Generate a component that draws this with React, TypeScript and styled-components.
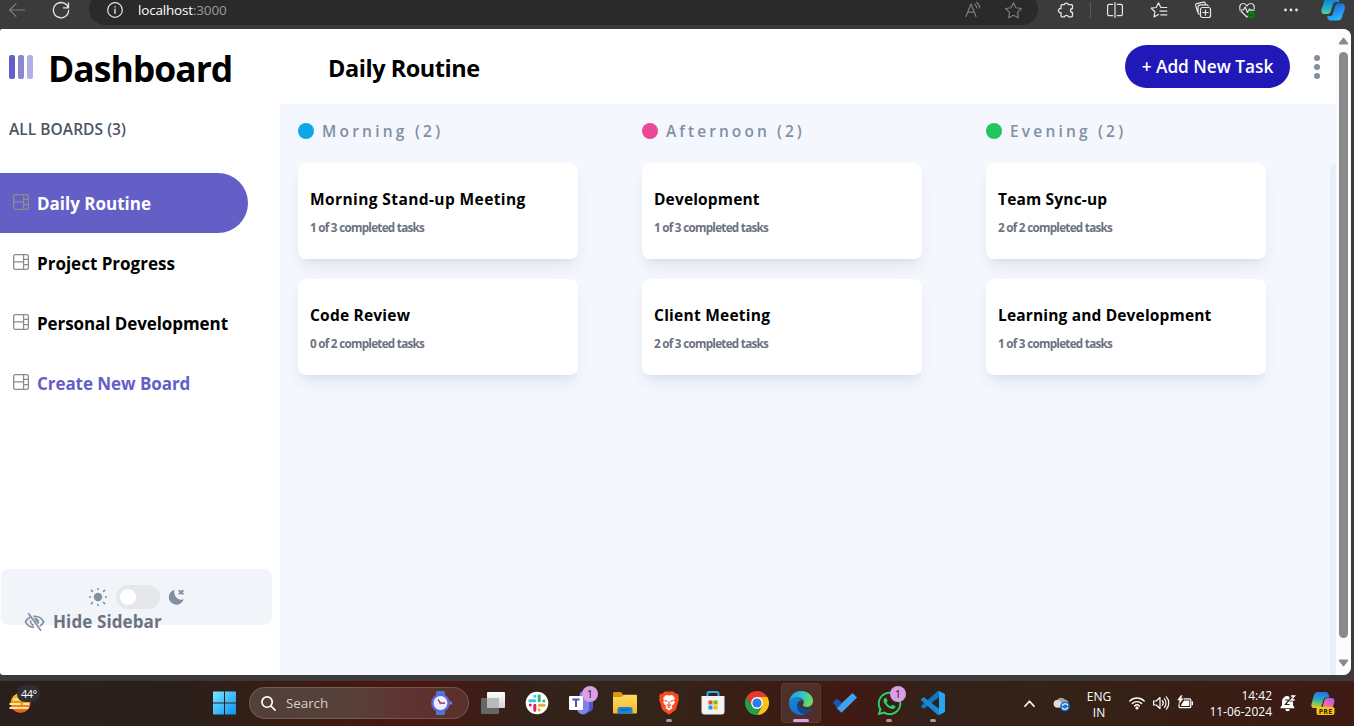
import React from 'react';
import styled, { createGlobalStyle } from 'styled-components';
import { FaWhatsapp } from 'react-icons/fa';

const GlobalStyle = createGlobalStyle`
  * { box-sizing: border-box; }
  body { margin: 0; overflow: hidden; background: #3b3b3b; }
  svg { display: block; flex-shrink: 0; overflow: visible; }
`;

const Screen = styled.div`
  width: 1354px;
  height: 726px;
  display: flex;
  flex-direction: column;
  overflow: hidden;
  background: #3b3b3b;
  font-family: 'Open Sans', 'Noto Sans', sans-serif;
`;

/* ---------- browser toolbar ---------- */

const BrowserBar = styled.header`
  height: 29px;
  flex-shrink: 0;
  display: flex;
  align-items: flex-end;
  overflow: hidden;
  color: #e6e6e6;
`;

const BarButton = styled.span<{ $w: number; $dim?: boolean }>`
  width: ${(p) => p.$w}px;
  height: 38px;
  flex-shrink: 0;
  display: flex;
  align-items: center;
  justify-content: center;
  color: ${(p) => (p.$dim ? '#7d7d7d' : 'inherit')};
`;

const AddressBar = styled.div`
  width: 949px;
  height: 32px;
  margin: 0 6px 4px 1px;
  padding: 2px 5px 0 3px;
  display: flex;
  align-items: center;
  border-radius: 16px;
  background: #2a2a2a;
`;

const Url = styled.span`
  flex: 1;
  font-size: 13.5px;
  line-height: 20px;
  letter-spacing: -0.18px;
  color: #fff;
`;

const Port = styled.span`
  color: #9a9a9a;
`;

const BarDivider = styled.span`
  width: 1px;
  height: 16px;
  margin: 0 2px 11px;
  background: #5c5c5c;
`;

/* ---------- page ---------- */

const Page = styled.div`
  width: 1351px;
  height: 646px;
  flex-shrink: 0;
  display: flex;
  border-radius: 2px 8px 8px 3px;
  overflow: hidden;
  background: #fff;
`;

const Sidebar = styled.aside`
  width: 280px;
  flex-shrink: 0;
  display: flex;
  flex-direction: column;
`;

const Brand = styled.div`
  height: 75px;
  padding: 3px 0 0 9px;
  display: flex;
  align-items: center;
`;

const BrandBars = styled.span`
  display: flex;
  gap: 3px;
  margin-bottom: 2px;
`;

const BrandBar = styled.i<{ $alpha: number }>`
  width: 6px;
  height: 24px;
  border-radius: 2px;
  background: #635fc7;
  opacity: ${(p) => p.$alpha};
`;

const BrandName = styled.h1`
  margin: 0 0 0 15px;
  font-size: 35.5px;
  line-height: 40px;
  font-weight: 700;
  letter-spacing: -0.98px;
  color: #000;
`;

const BoardsLabel = styled.h2`
  margin: 13px 0 32px 9px;
  font-size: 15.5px;
  line-height: 24px;
  font-weight: 600;
  letter-spacing: 0.05px;
  color: #4b5563;
`;

const BoardLink = styled.a<{ $active?: boolean; $accent?: boolean; $track: number }>`
  width: 248px;
  height: 60px;
  padding: 1px 0 0 13px;
  display: flex;
  align-items: center;
  gap: 8px;
  border-radius: 0 30px 30px 0;
  font-size: 17px;
  line-height: 29px;
  font-weight: 700;
  white-space: nowrap;
  letter-spacing: ${(p) => p.$track}px;
  background: ${(p) => (p.$active ? '#635fc7' : 'transparent')};
  color: ${(p) => (p.$active ? '#fff' : p.$accent ? '#635fc7' : '#000')};

  svg { margin-bottom: 3px; }
`;

const ThemePanel = styled.div`
  width: 271px;
  height: 56px;
  margin: 156px 0 0 1px;
  padding-top: 16px;
  border-radius: 8px;
  background: #f1f4f9;
  color: #828fa3;
`;

const ThemeRow = styled.div`
  height: 24px;
  padding-right: 2px;
  display: flex;
  align-items: center;
  justify-content: center;
  gap: 8px;
`;

const Switch = styled.span`
  width: 44px;
  height: 24px;
  padding: 4px;
  border-radius: 12px;
  background: #e5e7eb;
`;

const Knob = styled.i`
  display: block;
  width: 16px;
  height: 16px;
  border-radius: 50%;
  background: #fff;
`;

const HideSidebar = styled.button`
  height: 25px;
  padding: 0 0 0 23px;
  display: flex;
  align-items: center;
  gap: 8px;
  border: 0;
  background: none;
  font: 700 17px/25px 'Open Sans', sans-serif;
  letter-spacing: 0.1px;
  white-space: nowrap;
  color: #6b7280;

  svg { color: #828fa3; }
`;

const Main = styled.main`
  flex: 1;
  min-width: 0;
  display: flex;
  flex-direction: column;
`;

const TopBar = styled.div`
  height: 75px;
  flex-shrink: 0;
  padding: 0 16px 0 48px;
  display: flex;
  align-items: center;
`;

const BoardTitle = styled.h2`
  flex: 1;
  margin: 3px 0 0;
  font-size: 23.5px;
  line-height: 32px;
  font-weight: 700;
  letter-spacing: -0.45px;
  color: #000;
`;

const AddTask = styled.button`
  width: 165px;
  height: 43px;
  margin: 0 24px 0 0;
  padding: 0;
  border: 0;
  border-radius: 22px;
  background: #2019b8;
  color: #fff;
  font: 600 17.3px/28px 'Open Sans', sans-serif;
  letter-spacing: -0.02px;
  white-space: nowrap;
`;

const Board = styled.section`
  flex: 1;
  padding: 15px 0 0 18px;
  display: flex;
  gap: 64px;
  overflow: hidden;
  background: #f4f7fd;
`;

const Column = styled.div`
  width: 280px;
  flex-shrink: 0;
  display: flex;
  flex-direction: column;
  gap: 20px;
`;

const ColumnTitle = styled.h3<{ $track: number }>`
  margin: 0;
  display: flex;
  align-items: center;
  gap: 8px;
  font-size: 15.5px;
  line-height: 24px;
  font-weight: 600;
  letter-spacing: ${(p) => p.$track}px;
  color: #828fa3;
`;

const Dot = styled.i<{ $color: string }>`
  width: 16px;
  height: 16px;
  border-radius: 50%;
  background: ${(p) => p.$color};
`;

const Card = styled.article`
  height: 96px;
  padding: 24px 12px;
  display: flex;
  flex-direction: column;
  gap: 8px;
  border-radius: 8px;
  background: #fff;
  box-shadow: 0 10px 15px -3px rgba(54, 78, 126, 0.1), 0 4px 6px -4px rgba(54, 78, 126, 0.1);
`;

const CardTitle = styled.h4<{ $track: number }>`
  margin: 0;
  font-size: 15.5px;
  line-height: 24px;
  font-weight: 700;
  letter-spacing: ${(p) => p.$track}px;
  color: #000;
`;

const CardMeta = styled.p`
  margin: 0;
  font-size: 11.7px;
  line-height: 16px;
  font-weight: 700;
  letter-spacing: -0.73px;
  color: #6b7280;
`;

const NewColumn = styled.div`
  width: 280px;
  flex-shrink: 0;
  margin-top: 44px;
  border-radius: 8px 8px 0 0;
  background: #e9effa;
`;

const Scrollbar = styled.div`
  width: 15px;
  padding: 8px 0;
  display: flex;
  flex-direction: column;
  align-items: center;
  background: #fcfcfc;
`;

const Thumb = styled.i`
  width: 9px;
  height: 586px;
  margin: 7px 0 21px;
  border-radius: 5px;
  background: #8b8b8b;
`;

/* ---------- taskbar ---------- */

const Taskbar = styled.footer`
  height: 46px;
  margin-top: 5px;
  flex-shrink: 0;
  display: flex;
  align-items: center;
  color: #fff;
  box-shadow: inset 0 1px 0 rgba(255, 255, 255, 0.1);
  background: linear-gradient(90deg, #29201d 0, #2a1f1b 180px, #351e15 260px, #45190f 370px, #471813 430px, #33221a 530px, #33241a 650px, #3c1c14 790px, #411913 850px, #33221a 930px, #352116 1100px, #381e15 1200px, #3e1b14 1354px);
`;

const Weather = styled.div`
  width: 202px;
  height: 46px;
  padding: 5px 0 0 8px;
  display: flex;
`;

const Temp = styled.span`
  align-self: flex-start;
  margin-left: -16px;
  padding: 0 3px 0 4px;
  z-index: 1;
  border-radius: 8px;
  background: #2f2f31;
  font-size: 11px;
  line-height: 17px;
  letter-spacing: -0.5px;
`;

const TaskItem = styled.span<{ $active?: boolean }>`
  position: relative;
  width: 40px;
  height: 40px;
  margin: 0 2px;
  flex-shrink: 0;
  display: flex;
  align-items: center;
  justify-content: center;
  border-radius: 4px;
  background: ${(p) => (p.$active ? 'rgba(255,255,255,0.09)' : 'transparent')};
  box-shadow: ${(p) => (p.$active ? 'inset 0 0 0 1px rgba(255,255,255,0.06)' : 'none')};
`;

const RunMark = styled.i<{ $active?: boolean }>`
  position: absolute;
  left: 50%;
  bottom: 1px;
  width: ${(p) => (p.$active ? 16 : 6)}px;
  height: 3px;
  border-radius: 2px;
  transform: translateX(-50%);
  background: ${(p) => (p.$active ? '#dfa0e6' : '#a89a95')};
`;

const Badge = styled.b`
  position: absolute;
  right: 3px;
  top: 3px;
  width: 16px;
  height: 16px;
  border-radius: 50%;
  background: #dc9fe5;
  color: #2c1a2e;
  font-size: 11px;
  line-height: 16px;
  font-weight: 400;
  text-align: center;
`;

const SearchBox = styled.div`
  width: 220px;
  height: 32px;
  margin: 0 2px 0 3px;
  padding: 0 16px 0 11px;
  display: flex;
  align-items: center;
  border: 1px solid rgba(255, 255, 255, 0.16);
  border-radius: 16px;
  background: linear-gradient(90deg, #523f39, #56423a 45%, #603230 75%, #59302b);
`;

const SearchText = styled.span`
  flex: 1;
  margin-left: 10px;
  font-size: 13.5px;
  line-height: 20px;
  letter-spacing: -0.1px;
  color: #d6cecb;
`;

const Tray = styled.div`
  margin-left: auto;
  width: 341px;
  display: flex;
  align-items: center;
`;

const TrayCell = styled.span<{ $w: number; $gap?: number }>`
  width: ${(p) => p.$w}px;
  margin-left: ${(p) => p.$gap ?? 0}px;
  flex-shrink: 0;
  display: flex;
  justify-content: center;
`;

const TrayText = styled.span<{ $w: number; $end?: boolean }>`
  width: ${(p) => p.$w}px;
  padding-top: ${(p) => (p.$end ? 1 : 3)}px;
  flex-shrink: 0;
  display: flex;
  flex-direction: column;
  align-items: ${(p) => (p.$end ? 'flex-end' : 'center')};
  font-size: 12px;
  line-height: 16px;
  white-space: nowrap;
`;

/* ---------- icons ---------- */

type LineProps = { size?: number; sw?: number; children: React.ReactNode; box?: number };
const Line = ({ size = 16, sw = 1.2, box = 16, children }: LineProps) => (
  <svg width={size} height={size} viewBox={`0 0 ${box} ${box}`} fill="none" stroke="currentColor" strokeWidth={sw} strokeLinecap="round" strokeLinejoin="round">
    {children}
  </svg>
);

const BoardIcon = () => (
  <svg width="16" height="16" viewBox="0 0 16 16" fill="none" stroke="#8f8b88" strokeWidth="1.3">
    <rect x="0.65" y="0.65" width="14.7" height="14.7" rx="1.6" />
    <path d="M10.6 0.6v14.8M0.6 7.9h10M10.6 5.4h4.8M10.6 10.6h4.8" />
  </svg>
);

const SunIcon = () => (
  <svg width="20" height="20" viewBox="0 0 20 20" fill="currentColor">
    <circle cx="10" cy="10" r="4.2" />
    <g stroke="currentColor" strokeWidth="1.5">
      <path d="M10 1v2M10 17v2M1 10h2M17 10h2M2.9 2.9l2 2M15.1 15.1l2 2M2.9 17.1l2-2M15.1 4.9l2-2" />
    </g>
  </svg>
);

const MoonIcon = () => (
  <svg width="16" height="16" viewBox="0 0 16 16" fill="currentColor">
    <path d="M6.500 .700A7.600 7.600 0 1 0 15.700 10.300C10.500 12.300 5 7 6.500 .700Z" />
    <path d="M10.800 1.200 15.400 5.400M15.400 1.200 10.800 5.400" stroke="currentColor" strokeWidth="1.900" />
  </svg>
);

const EyeOffIcon = () => (
  <svg width="21" height="18" viewBox="0 0 21 18" fill="none" stroke="currentColor" strokeWidth="1.7">
    <path d="M6.2 4.3C4.2 5.300 2.400 7 1.500 8.900c1.600 3.200 4.700 5.300 8.500 5.500M9.300 3.300c4.600-.4 8.500 1.900 10.400 5.600-.8 1.700-2.200 3.200-4 4.200" />
    <path d="M6.700 7.200a4.300 4.300 0 0 0 3 5.200" />
    <path d="M10.500 4.800a4.200 4.200 0 0 1 3.900 6.200l-3-3.300z" fill="currentColor" strokeWidth="0.6" />
    <path d="M4.400.3 17 17.700" />
  </svg>
);

const starPath = 'M8 .700l2.300 4.700 5.100.700-3.700 3.600.9 5.200L8 12.500l-4.600 2.400.9-5.200L.6 6.100l5.100-.7z';

const BingCopilot = () => (
  <svg width="24" height="24" viewBox="0 0 24 24">
    <defs>
      <linearGradient id="cpA" x1="0" y1="0" x2="0" y2="1"><stop offset="0" stopColor="#0e7fd0" /><stop offset="0.5" stopColor="#19a5cf" /><stop offset="1" stopColor="#52d6a0" /></linearGradient>
      <linearGradient id="cpB" x1="0" y1="0" x2="0.4" y2="1"><stop offset="0" stopColor="#1d57cf" /><stop offset="1" stopColor="#27b4ff" /></linearGradient>
    </defs>
    <path d="M7 0h8c2 0 3 1.500 3.500 4h-3.800c-1.700 0-2.400 1-2.900 2.600l-2 6.400c-.5 1.600-1.300 3-3 3H3.200C.4 16 0 13.500.6 11L3.300 3C4.100 1 5 0 7 0z" fill="url(#cpA)" />
    <path d="M17 22.500H9.500c-2 0-3-1.500-3.300-4.500H9c1.700 0 2.400-1 2.900-2.600l2-6.400c.5-1.600 1.300-3.500 3-3.500h3.900c2.800 0 3.600 2.500 2.900 5.500L20.900 19.500c-.8 2-1.900 3-3.900 3z" fill="url(#cpB)" />
  </svg>
);

const TrayCopilot = () => (
  <svg width="24" height="24" viewBox="0 0 24 24">
    <defs>
      <linearGradient id="tcA" x1="0.5" y1="0" x2="0.300" y2="1"><stop offset="0" stopColor="#2475e8" /><stop offset="0.450" stopColor="#25a8c4" /><stop offset="0.8" stopColor="#8ac94a" /><stop offset="1" stopColor="#f2c232" /></linearGradient>
      <linearGradient id="tcB" x1="0.700" y1="0" x2="0.2" y2="1"><stop offset="0" stopColor="#a95cf0" /><stop offset="0.500" stopColor="#e567b5" /><stop offset="1" stopColor="#f58a6a" /></linearGradient>
    </defs>
    <path d="M6.500 1h8c2 0 3 1.300 3.500 4l.5 1.500h-3c-1.700 0-2.500 1-3 2.500l-2.500 8H3C.5 17 0 14.800.6 12.400L3 4c.7-2 1.500-3 3.500-3z" fill="url(#tcA)" />
    <path d="M16 7h4.500c2.800 0 3.300 2.400 2.700 4.500L21.300 18H11l2.200-8c.5-1.900 1.200-3 2.800-3z" fill="url(#tcB)" />
    <rect x="5.500" y="16" width="18" height="8" rx="2" fill="#fbc616" />
    <text x="14.500" y="22.600" textAnchor="middle" fontSize="7" fontWeight="700" fontFamily="Open Sans, sans-serif" fill="#2b2208" letterSpacing="0.2">PRE</text>
  </svg>
);

const WeatherIcon = () => (
  <svg width="25" height="32" viewBox="0 0 25 32">
    <defs><linearGradient id="sun" x1="0" y1="0" x2="0" y2="1"><stop offset="0" stopColor="#ffcf1c" /><stop offset="1" stopColor="#e8590c" /></linearGradient></defs>
    <circle cx="12.500" cy="18" r="10" fill="url(#sun)" />
    <path d="M5 14.500h9M1.500 19h11M15 19h6M1.500 23h19" stroke="#fbe3b5" strokeWidth="2" />
  </svg>
);

const WindowsIcon = () => (
  <svg width="24" height="24" viewBox="0 0 24 24">
    <defs><linearGradient id="win" x1="0" y1="0" x2="1" y2="1"><stop offset="0" stopColor="#7ae8ff" /><stop offset="1" stopColor="#0a91f5" /></linearGradient></defs>
    <path d="M1.500 .5H12v11H1V1zM13 .5h10.500l.5.500v10.500H13zM1 12.500h11v11H1.500L1 23zM13 12.500h11V23l-.5.500H13z" fill="url(#win)" />
  </svg>
);

const WatchIcon = () => (
  <svg width="22" height="26" viewBox="0 0 22 26">
    <rect x="6" y="1" width="9" height="6" rx="1.500" fill="#3f7fd0" />
    <rect x="6" y="19" width="9" height="6" rx="1.500" fill="#3f7fd0" />
    <rect x="18" y="11.500" width="4" height="3" rx="1" fill="#7d7df0" />
    <circle cx="10.500" cy="13" r="9.300" fill="#6a62dc" />
    <circle cx="10.500" cy="13" r="6.900" fill="#e9eefc" />
    <path d="M8 9.500l2.500 3.700H15" stroke="#5b3550" strokeWidth="1.300" fill="none" />
    <circle cx="10.500" cy="13" r="1.200" fill="#d9456a" />
  </svg>
);

const TaskViewIcon = () => (
  <svg width="24" height="24" viewBox="0 0 24 24">
    <defs><linearGradient id="tv" x1="0" y1="0" x2="0" y2="1"><stop offset="0" stopColor="#fff" /><stop offset="1" stopColor="#d4d4d4" /></linearGradient></defs>
    <rect x="6" y="1" width="18" height="16" rx="1" fill="url(#tv)" />
    <rect x="0" y="7" width="18" height="16" rx="1" fill="#666" />
    <path d="M6 7h12v10H6z" fill="#b9b9b9" />
  </svg>
);

const SlackIcon = () => (
  <svg width="24" height="24" viewBox="0 0 24 24">
    <circle cx="12" cy="12" r="11.300" fill="#fff" />
    <g strokeWidth="3" strokeLinecap="round">
      <path d="M9.900 5.200v.1M4.800 9.800h5" stroke="#36c5f0" />
      <path d="M18.800 9.900h.1M14.200 4.800v5" stroke="#2eb67d" />
      <path d="M14.100 18.800v.1M14.200 14.200h5" stroke="#ecb22e" />
      <path d="M5.200 14.100h.1M9.800 14.200v5" stroke="#e01e5a" />
    </g>
  </svg>
);

const TeamsIcon = () => (
  <svg width="24" height="24" viewBox="0 0 24 24">
    <circle cx="14" cy="4" r="3.500" fill="#7b83eb" />
    <path d="M17 8h7v9a4.500 4.500 0 0 1-7 3z" fill="#5059c9" />
    <path d="M8 8h12v9.500a6 6 0 0 1-12 0z" fill="#7b83eb" />
    <rect x="0" y="5" width="14" height="14" rx="1" fill="#fff" />
    <path d="M3.500 8.500h7M7 8.500v7.500" stroke="#4b53bc" strokeWidth="2" />
  </svg>
);

const FolderIcon = () => (
  <svg width="24" height="22" viewBox="0 0 24 22">
    <defs><linearGradient id="fold" x1="0" y1="0" x2="0" y2="1"><stop offset="0" stopColor="#ffda60" /><stop offset="1" stopColor="#f7b928" /></linearGradient></defs>
    <path d="M0 1.500C0 .6.500 0 1.500 0h6.500l2.500 3H24v6H0z" fill="#d8960c" />
    <path d="M0 5h8.500l2.500-2.200h11.500c1 0 1.500.5 1.500 1.500V20.500c0 .6-.4 1-1 1H1c-.6 0-1-.4-1-1z" fill="url(#fold)" />
    <path d="M4.500 21.500v-4c0-1.500 1-2.500 2.500-2.500h10c1.500 0 2.500 1 2.500 2.500v4z" fill="#1484d7" />
    <path d="M8 18h8" stroke="#0c5fa8" strokeWidth="1.200" />
  </svg>
);

const BraveIcon = () => (
  <svg width="22" height="24" viewBox="0 0 22 24">
    <path d="M6.500.5h9l2 2.200 1.800-.3 1.700 2.500-.7 2 .7 1-2.700 9.600c-.3 1-1 1.700-1.700 2.200L11 23.700l-5.600-4c-.7-.5-1.400-1.200-1.700-2.200L1 7.900l.7-1-.7-2 1.700-2.500 1.800.3z" fill="#fb4a1d" />
    <path d="M11 4.500l3-.5 2.800 2.700-.8 3.300 1 1-2 3.300-1.500.5 1 2.200L11 19.800 7.500 17l1-2.200-1.500-.5L5 11l1-1-.8-3.300L8 4z" fill="#fff" />
    <path d="M6.500 9.200l3 1.200M15.500 9.200l-3 1.200M11 10.500v3M9 13.500l2 1.200 2-1.200M9.500 16.600l1.500-.8 1.500.8" stroke="#fb4a1d" strokeWidth="1.100" fill="none" />
  </svg>
);

const StoreIcon = () => (
  <svg width="24" height="24" viewBox="0 0 24 24">
    <path d="M6.500 6V2.500c0-1 .5-1.500 1.500-1.500h8c1 0 1.500.5 1.500 1.500V6" fill="none" stroke="#2ab0ee" strokeWidth="2" />
    <path d="M.5 5h23v15.500a3 3 0 0 1-3 3h-17a3 3 0 0 1-3-3z" fill="#f3f3f5" />
    <path d="M7.500 9.500h4v4h-4z" fill="#f25022" /><path d="M12.500 9.500h4v4h-4z" fill="#7fba00" />
    <path d="M7.500 14.500h4v4h-4z" fill="#00a4ef" /><path d="M12.500 14.500h4v4h-4z" fill="#ffb900" />
  </svg>
);

const ChromeIcon = () => (
  <svg width="24" height="24" viewBox="0 0 24 24">
    <path d="M12 6h10.400A12 12 0 0 1 12 24l5.200-9z" fill="#fbc116" />
    <path d="M12 24A12 12 0 0 1 1.600 6l5.200 9 5.200 3 5.200-3z" fill="#21a14b" />
    <path d="M1.600 6a12 12 0 0 1 20.800 0H12l-5.200 9z" fill="#e33b2e" />
    <circle cx="12" cy="12" r="5.900" fill="#fff" />
    <circle cx="12" cy="12" r="4.600" fill="#2f7bea" />
  </svg>
);

const EdgeIcon = () => (
  <svg width="24" height="24" viewBox="0 0 24 24">
    <defs>
      <linearGradient id="edT" x1="0" y1="0.300" x2="1" y2="0.500"><stop offset="0" stopColor="#1b9de0" /><stop offset="0.500" stopColor="#2fc3d0" /><stop offset="1" stopColor="#6fe04f" /></linearGradient>
      <linearGradient id="edB" x1="0" y1="0" x2="0.500" y2="1"><stop offset="0" stopColor="#1787d8" /><stop offset="1" stopColor="#1272cc" /></linearGradient>
    </defs>
    <path d="M0 11.500C.4 4.800 5.500 0 12 0c7 0 12 4.800 12 10 0 3.600-2.700 6-6 6-2.700 0-4.200-1-4.200-1.900 0-.7 1-1.100 1-2.900C14.800 8.500 12 6.500 8.600 6.500 4.500 6.500 1.400 8.600 0 11.500z" fill="url(#edT)" />
    <path d="M0 12c.4-3.300 4-5.500 8-5.500 3 0 5.300 1.500 6.300 3.300-3-1.500-6.300 1-6.300 5 0 4.600 3.500 8.200 8 8.600-1.300.4-2.700.6-4 .6C5 24 0 18.500 0 12z" fill="url(#edB)" />
    <path d="M10 10.300c-1.200 1-2 2.600-2 4.500 0 4.600 4 8 8.300 8.300 2.600-.9 4.900-2.700 6.400-5 .3-.5-.1-.9-.6-.7-5.700 2.600-12.300-.5-12.700-5.400 0-.6.200-1.200.6-1.700z" fill="#0c4a96" />
  </svg>
);

const TodoIcon = () => (
  <svg width="24" height="20" viewBox="0 0 24 20">
    <path d="M3.500 15L19.500 0 24 4.500 8.500 19.800z" fill="#41a0f0" />
    <path d="M0 9.500l4-4 4.800 4.800-4.600 5z" fill="#1b56b5" />
  </svg>
);

const CodeIcon = () => (
  <svg width="24" height="24" viewBox="0 0 24 24">
    <path d="M18 6.300L3.300 17.500l-1.300-.1-1.600-1.500c-.5-.4-.5-1 0-1.400L16.800 0 18 .5z" fill="#0d76be" />
    <path d="M18 17.700L3.300 6.500 2 6.600.4 8.100c-.5.400-.5 1 0 1.400L16.800 24l1.200-.5z" fill="#1489d6" />
    <path d="M17 .3c.4-.3.900-.4 1.400-.1l4.800 2.300c.5.3.8.700.8 1.300v16.400c0 .6-.3 1-.8 1.300l-4.800 2.300c-.5.300-1 .2-1.400-.1.500.2 1-.2 1-.9V1.200c0-.7-.5-1.100-1-.9z" fill="#27a4f2" />
  </svg>
);

const CloudSync = () => (
  <svg width="17" height="16" viewBox="0 0 17 16">
    <path d="M4 12.500a3.800 3.800 0 0 1 0-7.500A5 5 0 0 1 12 4.500c2 .3 3.500 2 3.500 4s-1.500 4-3.500 4z" fill="#a7a3a1" />
    <path d="M4 12.500a3.800 3.800 0 0 1-.3-7.500c3 0 5 1.500 6.500 7.500z" fill="#dedbd9" />
    <circle cx="12" cy="11.500" r="4.800" fill="#1773d1" />
    <path d="M9.300 10.700a3 3 0 0 1 5-1v-1M14.700 12.300a3 3 0 0 1-5 1v1" stroke="#fff" strokeWidth="1.200" fill="none" />
  </svg>
);

/* ---------- data ---------- */

const boards = [
  { name: 'Daily Routine', track: 0, active: true },
  { name: 'Project Progress', track: 0 },
  { name: 'Personal Development', track: -0.08 },
  { name: 'Create New Board', track: -0.06, accent: true },
];

const columns = [
  {
    name: 'Morning (2)', color: '#0ea5e9', track: 3.23,
    tasks: [
      { title: 'Morning Stand-up Meeting', meta: '1 of 3 completed tasks', track: 0.4 },
      { title: 'Code Review', meta: '0 of 2 completed tasks', track: 0.21 },
    ],
  },
  {
    name: 'Afternoon (2)', color: '#ec4899', track: 3.07,
    tasks: [
      { title: 'Development', meta: '1 of 3 completed tasks', track: 0.15 },
      { title: 'Client Meeting', meta: '2 of 3 completed tasks', track: 0.25 },
    ],
  },
  {
    name: 'Evening (2)', color: '#22c55e', track: 3.19,
    tasks: [
      { title: 'Team Sync-up', meta: '2 of 2 completed tasks', track: 0.17 },
      { title: 'Learning and Development', meta: '1 of 3 completed tasks', track: 0.16 },
    ],
  },
];

const apps = [
  { icon: <TaskViewIcon /> },
  { icon: <SlackIcon /> },
  { icon: <TeamsIcon />, badge: '1' },
  { icon: <FolderIcon /> },
  { icon: <BraveIcon />, running: true },
  { icon: <StoreIcon /> },
  { icon: <ChromeIcon /> },
  { icon: <EdgeIcon />, running: true, active: true },
  { icon: <TodoIcon /> },
  { icon: <FaWhatsapp size={27} color="#25d366" />, running: true, badge: '1' },
  { icon: <CodeIcon />, running: true },
];

export default function App() {
  return (
    <Screen>
      <GlobalStyle />
      <BrowserBar>
        <BarButton $w={34} $dim>
          <Line><path d="M15.500 8H.8M7 1.700L.7 8 7 14.300" /></Line>
        </BarButton>
        <BarButton $w={54}>
          <Line sw={1.300}><path d="M15.300 6A7.600 7.600 0 1 0 15.600 8.500M15.500.8V5.800H10.500" /></Line>
        </BarButton>
        <AddressBar>
          <BarButton $w={46}>
            <Line sw={1.200}><circle cx="8" cy="8" r="7.300" /><path d="M8 7.300v4M8 4.600v.3" strokeWidth="1.400" /></Line>
          </BarButton>
          <Url>localhost<Port>:3000</Port></Url>
          <BarButton $w={40} $dim>
            <Line sw={1.200}><path d="M1 14.500L6 2l5 12.500M2.800 10.200h6.400M9.700 2.300a5 5 0 0 1 2 3.700M11.300.3a7.500 7.500 0 0 1 3.500 5.700" /></Line>
          </BarButton>
          <BarButton $w={40} $dim><Line size={17} sw={1.100}><path d={starPath} /></Line></BarButton>
        </AddressBar>
        <BarButton $w={44}>
          <Line sw={1.300}><path d="M4 2.700h2.300a2.100 2.100 0 0 1 4.100 0h3.100c.6 0 1 .4 1 1v2.800a2 2 0 0 0 0 4v3.300c0 .6-.4 1-1 1h-3a2.100 2.100 0 0 0-4 0H4c-.6 0-1-.4-1-1V10.600a2.100 2.100 0 1 1 0-4.100V3.700c0-.6.4-1 1-1z" /></Line>
        </BarButton>
        <BarDivider />
        <BarButton $w={44}>
          <Line sw={1.200}><path d="M5.700 2.300H2C1.200 2.300.6 2.900.6 3.700v8.600c0 .8.6 1.400 1.400 1.400h3.700M10.300 2.300H14c.8 0 1.400.6 1.400 1.400v8.600c0 .8-.6 1.400-1.400 1.400h-3.700M8 .5v15" /></Line>
        </BarButton>
        <BarButton $w={44}>
          <Line sw={1.200}><path d="M9.800 5.400L7.500.8 5.200 5.500.2 6.200l3.700 3.600-.9 5.100 4.500-2.400M9.800 5.500h6M9 9.200h6.800M9.800 12.900h6" /></Line>
        </BarButton>
        <BarButton $w={44}>
          <Line sw={1.200}><rect x="5.500" y="5.500" width="10" height="10" rx="2" /><path d="M10.500 7.800v5.400M7.800 10.500h5.400M2.600 9.800L.7 3.500C.5 2.700.9 1.900 1.700 1.700l6.700-1.600c.9-.2 1.500.2 1.800 1l.3 1M4.300 12.300c-.8-.3-1.200-1-1.200-1.900V5c0-1.300.9-2.200 2.200-2.200h6.200c.8 0 1.400.4 1.700 1" /></Line>
        </BarButton>
        <BarButton $w={44}>
          <Line sw={1.200}>
            <path d="M.8 6.500C.3 3.500 2 1.500 4.200 1.500 6 1.500 7.200 2.500 8 4c.8-1.500 2-2.500 3.800-2.500 2.200 0 3.900 2 3.400 5M2.200 9.500L8 15l2-1.800M.5 8h3.800l1.800-3 2.400 5.500L10.500 7l1 1.200h3.800" />
            <circle cx="12.200" cy="12.800" r="3.200" fill="#0f7a12" stroke="#0f7a12" /><path d="M10.700 12.800l1.100 1.100 2-2.100" stroke="#0a4a0b" strokeWidth="0.900" />
          </Line>
        </BarButton>
        <BarButton $w={44}>
          <svg width="16" height="4" viewBox="0 0 16 4" fill="currentColor"><circle cx="2.500" cy="2" r="1.400" /><circle cx="8" cy="2" r="1.400" /><circle cx="13.500" cy="2" r="1.400" /></svg>
        </BarButton>
        <BarButton $w={40}><BingCopilot /></BarButton>
      </BrowserBar>

      <Page>
        <Sidebar>
          <Brand>
            <BrandBars><BrandBar $alpha={1} /><BrandBar $alpha={0.750} /><BrandBar $alpha={0.500} /></BrandBars>
            <BrandName>Dashboard</BrandName>
          </Brand>
          <BoardsLabel>ALL BOARDS (3)</BoardsLabel>
          {boards.map((b) => (
            <BoardLink key={b.name} $active={b.active} $accent={b.accent} $track={b.track}>
              <BoardIcon />
              {b.name}
            </BoardLink>
          ))}
          <ThemePanel>
            <ThemeRow><SunIcon /><Switch><Knob /></Switch><MoonIcon /></ThemeRow>
            <HideSidebar><EyeOffIcon />Hide Sidebar</HideSidebar>
          </ThemePanel>
        </Sidebar>

        <Main>
          <TopBar>
            <BoardTitle>Daily Routine</BoardTitle>
            <AddTask>+ Add New Task</AddTask>
            <svg width="6" height="24" viewBox="0 0 6 24" fill="#828fa3"><circle cx="3" cy="3" r="3" /><circle cx="3" cy="12" r="3" /><circle cx="3" cy="21" r="3" /></svg>
          </TopBar>
          <Board>
            {columns.map((c) => (
              <Column key={c.name}>
                <ColumnTitle $track={c.track}><Dot $color={c.color} />{c.name}</ColumnTitle>
                {c.tasks.map((t) => (
                  <Card key={t.title}>
                    <CardTitle $track={t.track}>{t.title}</CardTitle>
                    <CardMeta>{t.meta}</CardMeta>
                  </Card>
                ))}
              </Column>
            ))}
            <NewColumn />
          </Board>
        </Main>

        <Scrollbar>
          <svg width="9" height="8" viewBox="0 0 9 8" fill="#8b8b8b"><path d="M4 .8h1L9 6v1.500H0V6z" /></svg>
          <Thumb />
          <svg width="9" height="8" viewBox="0 0 9 8" fill="#8b8b8b"><path d="M4 7.200h1L9 2V.5H0V2z" /></svg>
        </Scrollbar>
      </Page>

      <Taskbar>
        <Weather><WeatherIcon /><Temp>44°</Temp></Weather>
        <TaskItem><WindowsIcon /></TaskItem>
        <SearchBox>
          <Line size={15} sw={1.800}><circle cx="6.500" cy="6.500" r="5.500" /><path d="M10.500 10.500L15 15" /></Line>
          <SearchText>Search</SearchText>
          <WatchIcon />
        </SearchBox>
        {apps.map((a, i) => (
          <TaskItem key={i} $active={a.active}>
            {a.icon}
            {a.badge && <Badge>{a.badge}</Badge>}
            {a.running && <RunMark $active={a.active} />}
          </TaskItem>
        ))}
        <Tray>
          <TrayCell $w={32}><Line size={11} sw={1.800} box={12}><path d="M1 9l5-5.500L11 9" /></Line></TrayCell>
          <TrayCell $w={32}><CloudSync /></TrayCell>
          <TrayText $w={44}><span>ENG</span><span>IN</span></TrayText>
          <TrayCell $w={24} $gap={4}>
            <Line sw={1.400}><path d="M.8 6a10.200 10.200 0 0 1 14.400 0M3.300 8.600a6.700 6.700 0 0 1 9.400 0M5.600 11a3.400 3.400 0 0 1 4.800 0" /><circle cx="8" cy="13" r="0.900" fill="currentColor" /></Line>
          </TrayCell>
          <TrayCell $w={24}>
            <Line sw={1.200}><path d="M.6 6v4h2.600L7 13.500v-11L3.200 6zM9.300 5.700a3.500 3.500 0 0 1 0 4.600M11.300 3.700a6.200 6.200 0 0 1 0 8.600M13.300 1.800a9 9 0 0 1 0 12.400" /></Line>
          </TrayCell>
          <TrayCell $w={24}>
            <Line sw={1.200}><path d="M7 3.800h5.500c.8 0 1.300.5 1.300 1.300v6.300c0 .8-.5 1.300-1.300 1.300H3.300C2.500 12.700 2 12.200 2 11.400V9.500M15.400 6.800v2.900" /><path d="M4 11h8.300V5.400H7L5 8.500z" fill="currentColor" stroke="none" /><path d="M3.700.8L.7 5h2.200L2 8.700l4-4.900H3.800L5 .8z" fill="currentColor" strokeWidth="0.500" /></Line>
          </TrayCell>
          <TrayText $w={75} $end><span>14:42</span><span>11-06-2024</span></TrayText>
          <TrayCell $w={24} $gap={4}>
            <svg width="16" height="16" viewBox="0 0 16 16" fill="#fff">
              <path d="M2 6.500A5 5 0 0 1 9.500 1.800V6.500h3.500v3.800l1.300 2v1H.5v-1l1.500-2zM5.300 14h4.400a2.200 2.200 0 0 1-4.400 0z" />
              <path d="M5.200 5h4L5.400 9.500h4.200" fill="none" stroke="#38201a" strokeWidth="1.200" />
              <path d="M11 1h3.500L11 5h3.700" fill="none" stroke="#fff" strokeWidth="1.300" />
            </svg>
          </TrayCell>
          <TrayCell $w={40} $gap={3}><TrayCopilot /></TrayCell>
        </Tray>
      </Taskbar>
    </Screen>
  );
}
